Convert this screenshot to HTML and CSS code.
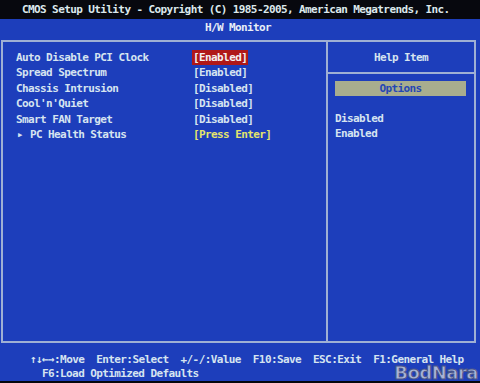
FILE: index.html
```html
<!DOCTYPE html>
<html lang="en">
  <head>
    <meta charset="UTF-8" />
    <meta name="viewport" content="width=device-width, initial-scale=1.0" />
    <title>H/W Monitor</title>
    <link rel="stylesheet" href="styles.css">
  </head>

  <body>
    <div class="topbar">CMOS Setup Utility - Copyright (C) 1985-2005, American Megatrends, Inc.</div>
    <div class="subtitle">H/W Monitor</div>

    <!-- Main box -->
    <div class="panel">
      <div class="items">
        <div class="row">
          <span class="label">Auto Disable PCI Clock</span>
          <span class="value selected">[Enabled]</span>
        </div>
        <div class="row">
          <span class="label">Spread Spectrum</span>
          <span class="value">[Enabled]</span>
        </div>
        <div class="row">
          <span class="label">Chassis Intrusion</span>
          <span class="value">[Disabled]</span>
        </div>
        <div class="row">
          <span class="label">Cool'n'Quiet</span>
          <span class="value">[Disabled]</span>
        </div>
        <div class="row">
          <span class="label">Smart FAN Target</span>
          <span class="value">[Disabled]</span>
        </div>
        <div class="row">
          <span class="label"><span class="arrow">▶</span>PC Health Status</span>
          <span class="value submenu">[Press Enter]</span>
        </div>
      </div>

      <div class="help">
        <div class="help-title">Help Item</div>
        <div class="help-body">
          <div class="options">Options</div>
          <div class="opt">Disabled</div>
          <div class="opt">Enabled</div>
        </div>
      </div>
    </div>

    <div class="footer">
      <div class="keys">↑↓←→:Move  Enter:Select  +/-/:Value  F10:Save  ESC:Exit  F1:General Help</div>
      <div class="keys indent">F6:Load Optimized Defaults</div>
    </div>
    <div class="bottom"></div>

    <div class="watermark">BodNara</div>
  </body>
</html>
```

FILE: styles.css
```css
body {
  margin: 0;
  width: 480px;
  height: 383px;
  overflow: hidden;
  position: relative;
  background-color: #1d3ebb;
  color: #d6e4f0;
  font-family: "DejaVu Sans Mono", "Liberation Mono", monospace;
  font-size: 11px;
  letter-spacing: -0.6px;
  font-weight: bold;
}

.topbar {
  height: 19px;
  line-height: 20px;
  padding-left: 22px;
  background-color: #07080e;
  color: #dce8ec;
  white-space: nowrap;
}

.subtitle {
  height: 21px;
  line-height: 17px;
  text-align: center;
  padding-right: 4px;
  color: #e8eef6;
}

.panel {
  display: flex;
  height: 299px;
  margin: 0 4px 0 1px;
  border: 2px solid #9fb0d4;
}

.items {
  width: 323px;
  padding: 8px 0 0 13px;
  box-sizing: border-box;
}

.row {
  display: flex;
  height: 15.4px;
  line-height: 15px;
}

.label {
  width: 176px;
}

.arrow {
  display: inline-block;
  width: 14px;
  font-size: 7px;
  vertical-align: 1px;
  padding-left: 2px;
  box-sizing: border-box;
}

.value {
  padding: 0 1px;
}

.selected {
  background-color: #b01818;
  color: #f4f0f0;
}

.submenu {
  color: #e4e46c;
}

.help {
  flex: 1;
  border-left: 2px solid #9fb0d4;
}

.help-title {
  height: 30px;
  line-height: 32px;
  text-align: center;
  border-bottom: 2px solid #9fb0d4;
}

.help-body {
  padding: 7px 8px 0 7px;
}

.options {
  height: 15px;
  line-height: 15px;
  background-color: #a8ad8e;
  color: #2446b4;
  text-align: center;
  margin-bottom: 15px;
}

.opt {
  line-height: 15.4px;
}

.footer {
  padding: 10px 0 0 30px;
  line-height: 14px;
  height: 28px;
}

.keys {
  white-space: pre;
}

.indent {
  padding-left: 12px;
}

.bottom {
  height: 3px;
  background-color: #05060c;
}

.watermark {
  position: absolute;
  right: 2px;
  bottom: 0;
  font-family: "DejaVu Sans", sans-serif;
  font-size: 18px;
  font-weight: bold;
  color: #aab4d6;
  -webkit-text-stroke: 1px #4a5688;
  letter-spacing: -0.5px;
}
```
